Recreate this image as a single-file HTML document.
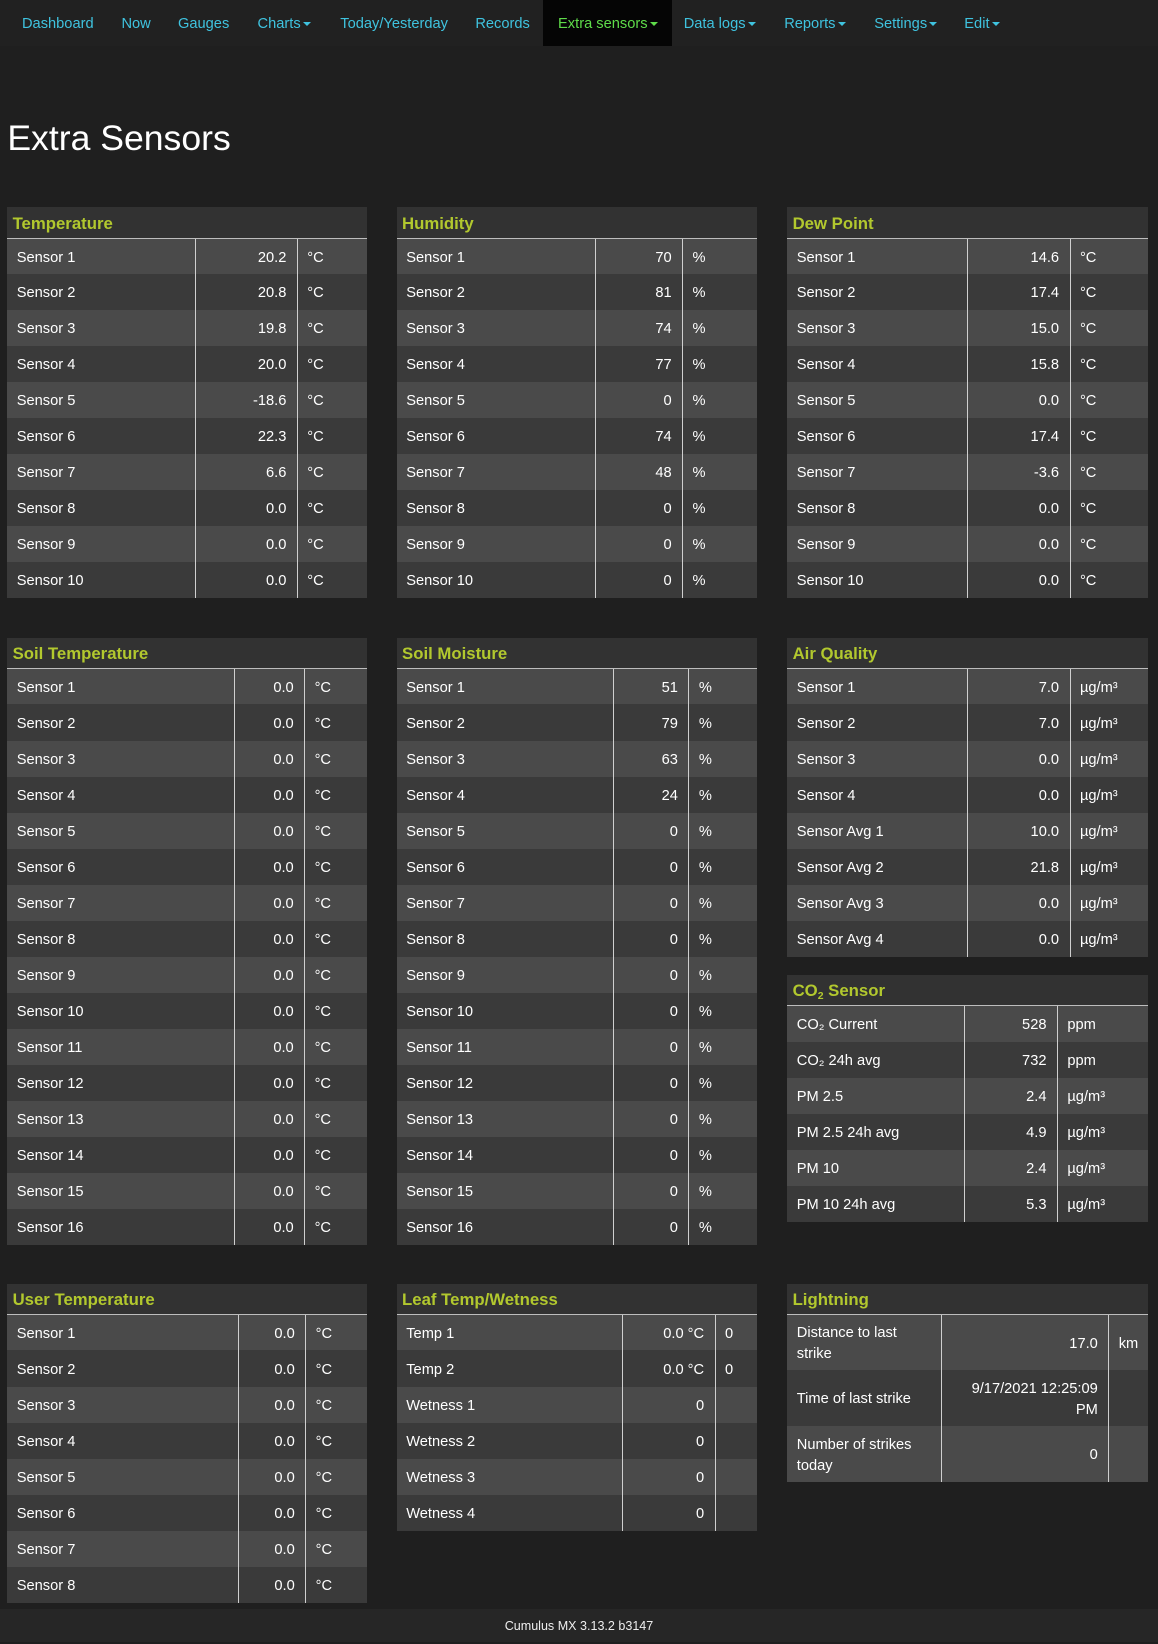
<!DOCTYPE html>
<html><head><meta charset="utf-8">
<style>
html,body{margin:0;padding:0;background:#1f1f1f;}
body{width:1106px;height:1568px;zoom:1.047;position:relative;overflow:hidden;font-family:"Liberation Sans",Arial,sans-serif;color:#fff;}
.nav{position:absolute;left:0;top:0;width:1106px;height:44px;background:#212121;}
.nav a{position:absolute;top:0;height:44px;line-height:46px;font-size:14px;color:#3fc3df;text-decoration:none;}
.nav a.act{background:#050505;color:#5fdc4a;padding:0 14px;}
.caret{display:inline-block;width:0;height:0;border-left:4px solid transparent;border-right:4px solid transparent;border-top:4px solid currentColor;vertical-align:middle;margin-left:2px;}
h1{position:absolute;left:7px;top:110px;margin:0;font-size:34px;font-weight:normal;line-height:44px;}
.t{position:absolute;width:344px;border-collapse:collapse;table-layout:fixed;font-size:14px;}
.t th{background:#323232;color:#b2c82e;font-size:16px;text-align:left;height:27px;padding:2px 0 0 5px;border-bottom:1px solid #bdbdbd;font-weight:bold;}
.t td{height:34.4px;padding:3px 9px 0;border-left:1px solid #cfcfcf;line-height:20px;box-sizing:border-box;}
.t td:first-child{border-left:none;}
.t td.v{text-align:right;padding-right:10px;}
.t tr:nth-child(even) td{background:#4a4a4a;}
.t tr:nth-child(odd) td{background:#3a3a3a;}
.t.l td{height:53.3px;}
.foot{position:absolute;left:0;top:1537px;width:1106px;height:31px;background:#262626;text-align:center;font-size:12px;line-height:33px;color:#eee;}
sub{font-size:10px;vertical-align:-3px;line-height:0;}
</style></head><body>
<div class="nav">
<a style="left:21px">Dashboard</a>
<a style="left:116px">Now</a>
<a style="left:170px">Gauges</a>
<a style="left:246px">Charts<span class="caret"></span></a>
<a style="left:325px">Today/Yesterday</a>
<a style="left:454px">Records</a>
<a class="act" style="left:519px">Extra sensors<span class="caret"></span></a>
<a style="left:653px">Data logs<span class="caret"></span></a>
<a style="left:749px">Reports<span class="caret"></span></a>
<a style="left:835px">Settings<span class="caret"></span></a>
<a style="left:921px">Edit<span class="caret"></span></a>
</div>
<h1>Extra Sensors</h1>

<table class="t" style="left:7px;top:198px"><colgroup><col style="width:180px"><col style="width:97px"><col></colgroup>
<tr><th colspan="3">Temperature</th></tr>
<tr><td>Sensor 1</td><td class="v">20.2</td><td>°C</td></tr>
<tr><td>Sensor 2</td><td class="v">20.8</td><td>°C</td></tr>
<tr><td>Sensor 3</td><td class="v">19.8</td><td>°C</td></tr>
<tr><td>Sensor 4</td><td class="v">20.0</td><td>°C</td></tr>
<tr><td>Sensor 5</td><td class="v">-18.6</td><td>°C</td></tr>
<tr><td>Sensor 6</td><td class="v">22.3</td><td>°C</td></tr>
<tr><td>Sensor 7</td><td class="v">6.6</td><td>°C</td></tr>
<tr><td>Sensor 8</td><td class="v">0.0</td><td>°C</td></tr>
<tr><td>Sensor 9</td><td class="v">0.0</td><td>°C</td></tr>
<tr><td>Sensor 10</td><td class="v">0.0</td><td>°C</td></tr>
</table>

<table class="t" style="left:379px;top:198px"><colgroup><col style="width:190px"><col style="width:83px"><col></colgroup>
<tr><th colspan="3">Humidity</th></tr>
<tr><td>Sensor 1</td><td class="v">70</td><td>%</td></tr>
<tr><td>Sensor 2</td><td class="v">81</td><td>%</td></tr>
<tr><td>Sensor 3</td><td class="v">74</td><td>%</td></tr>
<tr><td>Sensor 4</td><td class="v">77</td><td>%</td></tr>
<tr><td>Sensor 5</td><td class="v">0</td><td>%</td></tr>
<tr><td>Sensor 6</td><td class="v">74</td><td>%</td></tr>
<tr><td>Sensor 7</td><td class="v">48</td><td>%</td></tr>
<tr><td>Sensor 8</td><td class="v">0</td><td>%</td></tr>
<tr><td>Sensor 9</td><td class="v">0</td><td>%</td></tr>
<tr><td>Sensor 10</td><td class="v">0</td><td>%</td></tr>
</table>

<table class="t" style="left:752px;top:198px"><colgroup><col style="width:172px"><col style="width:98px"><col></colgroup>
<tr><th colspan="3">Dew Point</th></tr>
<tr><td>Sensor 1</td><td class="v">14.6</td><td>°C</td></tr>
<tr><td>Sensor 2</td><td class="v">17.4</td><td>°C</td></tr>
<tr><td>Sensor 3</td><td class="v">15.0</td><td>°C</td></tr>
<tr><td>Sensor 4</td><td class="v">15.8</td><td>°C</td></tr>
<tr><td>Sensor 5</td><td class="v">0.0</td><td>°C</td></tr>
<tr><td>Sensor 6</td><td class="v">17.4</td><td>°C</td></tr>
<tr><td>Sensor 7</td><td class="v">-3.6</td><td>°C</td></tr>
<tr><td>Sensor 8</td><td class="v">0.0</td><td>°C</td></tr>
<tr><td>Sensor 9</td><td class="v">0.0</td><td>°C</td></tr>
<tr><td>Sensor 10</td><td class="v">0.0</td><td>°C</td></tr>
</table>

<table class="t" style="left:7px;top:609px"><colgroup><col style="width:217px"><col style="width:67px"><col></colgroup>
<tr><th colspan="3">Soil Temperature</th></tr>
<tr><td>Sensor 1</td><td class="v">0.0</td><td>°C</td></tr>
<tr><td>Sensor 2</td><td class="v">0.0</td><td>°C</td></tr>
<tr><td>Sensor 3</td><td class="v">0.0</td><td>°C</td></tr>
<tr><td>Sensor 4</td><td class="v">0.0</td><td>°C</td></tr>
<tr><td>Sensor 5</td><td class="v">0.0</td><td>°C</td></tr>
<tr><td>Sensor 6</td><td class="v">0.0</td><td>°C</td></tr>
<tr><td>Sensor 7</td><td class="v">0.0</td><td>°C</td></tr>
<tr><td>Sensor 8</td><td class="v">0.0</td><td>°C</td></tr>
<tr><td>Sensor 9</td><td class="v">0.0</td><td>°C</td></tr>
<tr><td>Sensor 10</td><td class="v">0.0</td><td>°C</td></tr>
<tr><td>Sensor 11</td><td class="v">0.0</td><td>°C</td></tr>
<tr><td>Sensor 12</td><td class="v">0.0</td><td>°C</td></tr>
<tr><td>Sensor 13</td><td class="v">0.0</td><td>°C</td></tr>
<tr><td>Sensor 14</td><td class="v">0.0</td><td>°C</td></tr>
<tr><td>Sensor 15</td><td class="v">0.0</td><td>°C</td></tr>
<tr><td>Sensor 16</td><td class="v">0.0</td><td>°C</td></tr>
</table>

<table class="t" style="left:379px;top:609px"><colgroup><col style="width:207px"><col style="width:72px"><col></colgroup>
<tr><th colspan="3">Soil Moisture</th></tr>
<tr><td>Sensor 1</td><td class="v">51</td><td>%</td></tr>
<tr><td>Sensor 2</td><td class="v">79</td><td>%</td></tr>
<tr><td>Sensor 3</td><td class="v">63</td><td>%</td></tr>
<tr><td>Sensor 4</td><td class="v">24</td><td>%</td></tr>
<tr><td>Sensor 5</td><td class="v">0</td><td>%</td></tr>
<tr><td>Sensor 6</td><td class="v">0</td><td>%</td></tr>
<tr><td>Sensor 7</td><td class="v">0</td><td>%</td></tr>
<tr><td>Sensor 8</td><td class="v">0</td><td>%</td></tr>
<tr><td>Sensor 9</td><td class="v">0</td><td>%</td></tr>
<tr><td>Sensor 10</td><td class="v">0</td><td>%</td></tr>
<tr><td>Sensor 11</td><td class="v">0</td><td>%</td></tr>
<tr><td>Sensor 12</td><td class="v">0</td><td>%</td></tr>
<tr><td>Sensor 13</td><td class="v">0</td><td>%</td></tr>
<tr><td>Sensor 14</td><td class="v">0</td><td>%</td></tr>
<tr><td>Sensor 15</td><td class="v">0</td><td>%</td></tr>
<tr><td>Sensor 16</td><td class="v">0</td><td>%</td></tr>
</table>

<table class="t" style="left:752px;top:609px"><colgroup><col style="width:172px"><col style="width:98px"><col></colgroup>
<tr><th colspan="3">Air Quality</th></tr>
<tr><td>Sensor 1</td><td class="v">7.0</td><td>µg/m³</td></tr>
<tr><td>Sensor 2</td><td class="v">7.0</td><td>µg/m³</td></tr>
<tr><td>Sensor 3</td><td class="v">0.0</td><td>µg/m³</td></tr>
<tr><td>Sensor 4</td><td class="v">0.0</td><td>µg/m³</td></tr>
<tr><td>Sensor Avg 1</td><td class="v">10.0</td><td>µg/m³</td></tr>
<tr><td>Sensor Avg 2</td><td class="v">21.8</td><td>µg/m³</td></tr>
<tr><td>Sensor Avg 3</td><td class="v">0.0</td><td>µg/m³</td></tr>
<tr><td>Sensor Avg 4</td><td class="v">0.0</td><td>µg/m³</td></tr>
</table>

<table class="t" style="left:752px;top:931px"><colgroup><col style="width:169px"><col style="width:89px"><col></colgroup>
<tr><th colspan="3">CO<sub>2</sub> Sensor</th></tr>
<tr><td>CO₂ Current</td><td class="v">528</td><td>ppm</td></tr>
<tr><td>CO₂ 24h avg</td><td class="v">732</td><td>ppm</td></tr>
<tr><td>PM 2.5</td><td class="v">2.4</td><td>µg/m³</td></tr>
<tr><td>PM 2.5 24h avg</td><td class="v">4.9</td><td>µg/m³</td></tr>
<tr><td>PM 10</td><td class="v">2.4</td><td>µg/m³</td></tr>
<tr><td>PM 10 24h avg</td><td class="v">5.3</td><td>µg/m³</td></tr>
</table>

<table class="t" style="left:7px;top:1226px"><colgroup><col style="width:221px"><col style="width:64px"><col></colgroup>
<tr><th colspan="3">User Temperature</th></tr>
<tr><td>Sensor 1</td><td class="v">0.0</td><td>°C</td></tr>
<tr><td>Sensor 2</td><td class="v">0.0</td><td>°C</td></tr>
<tr><td>Sensor 3</td><td class="v">0.0</td><td>°C</td></tr>
<tr><td>Sensor 4</td><td class="v">0.0</td><td>°C</td></tr>
<tr><td>Sensor 5</td><td class="v">0.0</td><td>°C</td></tr>
<tr><td>Sensor 6</td><td class="v">0.0</td><td>°C</td></tr>
<tr><td>Sensor 7</td><td class="v">0.0</td><td>°C</td></tr>
<tr><td>Sensor 8</td><td class="v">0.0</td><td>°C</td></tr>
</table>

<table class="t" style="left:379px;top:1226px"><colgroup><col style="width:216px"><col style="width:88px"><col></colgroup>
<tr><th colspan="3">Leaf Temp/Wetness</th></tr>
<tr><td>Temp 1</td><td class="v">0.0 °C</td><td>0</td></tr>
<tr><td>Temp 2</td><td class="v">0.0 °C</td><td>0</td></tr>
<tr><td>Wetness 1</td><td class="v">0</td><td></td></tr>
<tr><td>Wetness 2</td><td class="v">0</td><td></td></tr>
<tr><td>Wetness 3</td><td class="v">0</td><td></td></tr>
<tr><td>Wetness 4</td><td class="v">0</td><td></td></tr>
</table>

<table class="t l" style="left:752px;top:1226px"><colgroup><col style="width:147px"><col style="width:160px"><col></colgroup>
<tr><th colspan="3">Lightning</th></tr>
<tr><td>Distance to last strike</td><td class="v">17.0</td><td>km</td></tr>
<tr><td>Time of last strike</td><td class="v">9/17/2021 12:25:09 PM</td><td></td></tr>
<tr><td>Number of strikes today</td><td class="v">0</td><td></td></tr>
</table>

<div class="foot">Cumulus MX 3.13.2 b3147</div>
</body></html>
